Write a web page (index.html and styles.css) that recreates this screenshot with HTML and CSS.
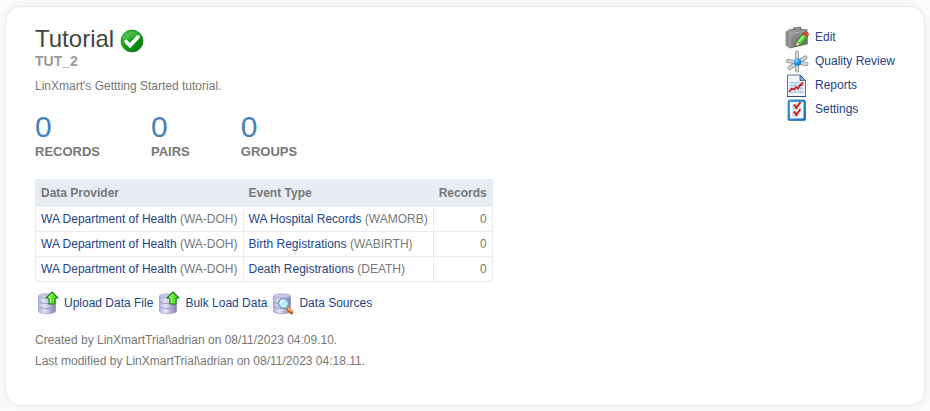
FILE: index.html
```
<!DOCTYPE html>
<html lang="en">
<head>
<meta charset="utf-8">
<meta name="viewport" content="width=device-width, initial-scale=1">
<title>Tutorial</title>
<link rel="stylesheet" href="styles.css">
</head>
<body>
<svg class="defs" aria-hidden="true">
  <defs>
    <linearGradient id="cylinder" x1="0" x2="1">
      <stop offset="0" stop-color="#b4b3dc"/><stop offset=".35" stop-color="#e6e6fa"/><stop offset="1" stop-color="#807eae"/>
    </linearGradient>
    <linearGradient id="steel" x1="0" x2="1" y2="1">
      <stop offset="0" stop-color="#a2a2a2"/><stop offset="1" stop-color="#656565"/>
    </linearGradient>
    <radialGradient id="ball" cx=".35" cy=".3" r=".8">
      <stop offset="0" stop-color="#8fd0ff"/><stop offset=".5" stop-color="#2d98f2"/><stop offset="1" stop-color="#0965c0"/>
    </radialGradient>
    <linearGradient id="ok" x1="0" y1="0" x2="1" y2="1">
      <stop offset="0" stop-color="#54c852"/><stop offset=".5" stop-color="#0e9d12"/><stop offset="1" stop-color="#006b0a"/>
    </linearGradient>
    <linearGradient id="frame" x1="0" y1="0" x2="1" y2="1">
      <stop offset="0" stop-color="#53b1ef"/><stop offset="1" stop-color="#0d65b5"/>
    </linearGradient>
    <symbol id="database" viewBox="0 0 24 24">
      <path d="M2.500 5v15c0 3.600 17 3.600 17 0V5z" fill="url(#cylinder)" stroke="#9a99c2" stroke-width=".7"/>
      <ellipse cx="11" cy="5" rx="8.500" ry="2.200" fill="#c9c8e8" stroke="#a3a2cb" stroke-width=".7"/>
      <path d="M3 11c1.500 2 14.500 2 16 0M3 16c1.500 2 14.500 2 16 0" fill="none" stroke="#8f8eba" stroke-width=".8"/>
    </symbol>
    <symbol id="upload" viewBox="0 0 24 24">
      <use href="#database"/>
      <path d="M16 1l6 6h-3v6h-6V7h-3z" fill="#5ee22d" stroke="#14860c" stroke-width="1.100" stroke-linejoin="round"/>
      <path d="M16 3l-3.500 3.300H14.300v5.500" fill="none" stroke="#bdf98f"/>
    </symbol>
  </defs>
</svg>
<main class="card">
  <section class="details">
    <h1 class="title">Tutorial
      <svg class="status" viewBox="0 0 24 24" role="img" aria-label="Ready">
        <circle cx="12" cy="12" r="11" fill="url(#ok)" stroke="#087b10" stroke-width=".6"/>
        <path d="M3 10C4 3 18-1 21 8 15 6 10 12 3 10z" fill="#fff" opacity=".14"/>
        <path d="M6 12.500l4 4 8-8.500" fill="none" stroke="#fff" stroke-width="3.800" stroke-linecap="round"/>
      </svg>
    </h1>
    <p class="code">TUT_2</p>
    <p class="description">LinXmart's Gettting Started tutorial.</p>
    <dl class="stats">
      <div class="stat"><dt>RECORDS</dt><dd>0</dd></div>
      <div class="stat"><dt>PAIRS</dt><dd>0</dd></div>
      <div class="stat"><dt>GROUPS</dt><dd>0</dd></div>
    </dl>
    <table class="sources">
      <thead>
        <tr><th scope="col">Data Provider</th><th scope="col">Event Type</th><th scope="col" class="count">Records</th></tr>
      </thead>
      <tbody>
        <tr><td><a href="#">WA Department of Health</a> (WA-DOH)</td><td><a href="#">WA Hospital Records</a> (WAMORB)</td><td class="count">0</td></tr>
        <tr><td><a href="#">WA Department of Health</a> (WA-DOH)</td><td><a href="#">Birth Registrations</a> (WABIRTH)</td><td class="count">0</td></tr>
        <tr><td><a href="#">WA Department of Health</a> (WA-DOH)</td><td><a href="#">Death Registrations</a> (DEATH)</td><td class="count">0</td></tr>
      </tbody>
    </table>
    <nav class="data-actions" aria-label="Data">
      <a class="action" href="#"><svg class="icon" aria-hidden="true"><use href="#upload"/></svg>Upload Data File</a>
      <a class="action" href="#"><svg class="icon" aria-hidden="true"><use href="#upload"/></svg>Bulk Load Data</a>
      <a class="action" href="#"><svg class="icon" viewBox="0 0 24 24" aria-hidden="true">
        <use href="#database"/>
        <path d="M16.500 17l4 4.500" stroke="#cf5c16" stroke-width="3.600" stroke-linecap="round"/>
        <path d="M16.500 16.500l4 4" stroke="#ffc48a" stroke-width="1.400"/>
        <circle cx="12.500" cy="12.500" r="5" fill="#b9ecff" stroke="#6f9db8" stroke-width="1.300"/>
        <path d="M9.500 12.500a3 3 0 0 1 3-3" fill="none" stroke="#fff" stroke-width="1.600"/>
      </svg>Data Sources</a>
    </nav>
    <div class="meta">
      <p>Created by LinXmartTrial\adrian on 08/11/2023 04:09.10.</p>
      <p>Last modified by LinXmartTrial\adrian on 08/11/2023 04:18.11.</p>
    </div>
  </section>
  <nav class="page-actions" aria-label="Project">
    <a class="action" href="#"><svg class="icon" viewBox="0 0 24 24" aria-hidden="true">
      <path d="M9 5.500V3.200l6.500-.7V5" fill="none" stroke="#686868" stroke-width="1.500"/>
      <path d="M1 7l3.500-2.500L22 4.500l.5 14.500L5 23l-4-3z" fill="url(#steel)" stroke="#6c6c6c" stroke-width=".7"/>
      <path d="M1 7l4 1.500V23l-4-3z" fill="#8b8b8b"/>
      <path d="M5 8.500L22 6M5 8.500V22" fill="none" stroke="#bdbdbd" stroke-width=".8"/>
      <path d="M10.500 21.500l1-5L18 8.500l4.500 3.200-7 8.300z" fill="#54d335" stroke="#24731b" stroke-width=".8"/>
      <path d="M13 17.500l7-8.200" stroke="#a7f685" stroke-width="1.600"/>
      <path d="M17.500 9l1.700-2c1.500-1.300 5 1 4.300 3.200l-1.500 2z" fill="#e94a38" stroke="#9f2a20" stroke-width=".6"/>
      <path d="M10.500 21.500l1-5 4 3z" fill="#f4dfb5" stroke="#444" stroke-width=".5"/>
    </svg>Edit</a>
    <a class="action" href="#"><svg class="icon" viewBox="0 0 24 24" aria-hidden="true">
      <g fill="none" stroke-linecap="round">
        <path d="M12 3.500v18M3 12l18.500 3M4.500 19L20.500 8.500" stroke="#858a8e" stroke-width="4"/>
        <path d="M12 3.500v18M3 12l18.500 3M4.500 19L20.500 8.500" stroke="#d4d7da" stroke-width="2.600"/>
      </g>
      <circle cx="12.500" cy="13" r="3.800" fill="url(#ball)"/>
    </svg>Quality Review</a>
    <a class="action" href="#"><svg class="icon" viewBox="0 0 24 24" aria-hidden="true">
      <path d="M2.500 2H15l5.500 5.500V24h-18z" fill="#f0f5fc" stroke="#607493"/>
      <path d="M15 2v5.500h5.500z" fill="#87a9d3" stroke="#3b5477" stroke-width=".8"/>
      <path d="M4 9.500h15v10H4z" fill="#e0ebf8"/>
      <path d="M4 9.500h15M4 12.500h15M4 15.500h15M4 19.500h15M7 9v11M10 9v11M13 9v11M16 9v11" stroke="#a8bfdd" stroke-width=".7"/>
      <path d="M4 19l3-3.500 2 1 2-2.500 2 1.500 2.500-4 1 .5 1.500-2.500" fill="none" stroke="#c71c18" stroke-width="1.600"/>
      <path d="M2 23.500h19" stroke="#354c6c"/>
    </svg>Reports</a>
    <a class="action" href="#"><svg class="icon" viewBox="0 0 24 24" aria-hidden="true">
      <rect x="3" y="3" width="17.500" height="20.500" rx="1.500" fill="url(#frame)" stroke="#17649f" stroke-width=".7"/>
      <path d="M5 5h13.500v16.500H5z" fill="#f5f9fd"/>
      <path d="M8 8h4.500v4H8zM8 15h4.500v4H8z" fill="#fff" stroke="#9ca8b5" stroke-width=".8"/>
      <path d="M9 7.500l2.300 3.300L15.500 5M9 14.500l2.300 3.300L15.500 12" fill="none" stroke="#d41813" stroke-width="1.900"/>
    </svg>Settings</a>
  </nav>
</main>
</body>
</html>
```
FILE: styles.css
```
* { box-sizing: border-box; }

body {
  margin: 0;
  padding: 6px 5px;
  background: #fafafb;
  color: #777;
  font: 12px/16px "Liberation Sans", Arial, sans-serif;
}

h1, p, dl, dd { margin: 0; }

a { color: #224488; text-decoration: none; }
a:hover { text-decoration: underline; }

.defs { position: absolute; width: 0; height: 0; }

.card {
  display: flex;
  justify-content: space-between;
  align-items: flex-start;
  gap: 24px;
  padding: 18px 29px 33px;
  background: #fff;
  border: 1px solid #e9e9eb;
  border-radius: 16px;
  box-shadow: 0 0 8px #eeeef3;
}

.title {
  display: flex;
  align-items: center;
  gap: 6px;
  color: #444;
  font-size: 24px;
  font-weight: normal;
  line-height: 28px;
}

.status { width: 24px; height: 24px; margin-top: 3px; }

.code { color: #999; font-size: 14px; font-weight: bold; }

.description { margin-top: 9px; }

.stats { display: flex; gap: 51px; margin-top: 16px; }
.stat { display: flex; flex-direction: column-reverse; }
.stat dt { font-size: 13px; font-weight: bold; }
.stat dd { color: #4682b4; font-size: 30px; line-height: 34px; }

.sources {
  margin-top: 19px;
  border-collapse: collapse;
}

.sources th,
.sources td {
  padding: 4px 5px;
  border: 1px solid #e8edf4;
  text-align: left;
  white-space: nowrap;
}

.sources th { padding: 5px; background: #e8edf4; }
.sources .count { text-align: right; }

.action { display: flex; align-items: center; gap: 4px; white-space: nowrap; }
.page-actions .action { gap: 6px; }

.icon { flex: none; width: 24px; height: 24px; }

.data-actions { display: flex; flex-wrap: wrap; gap: 4px; margin-top: 9px; padding-left: 1px; }

.meta { margin-top: 15px; line-height: 21px; }
```
